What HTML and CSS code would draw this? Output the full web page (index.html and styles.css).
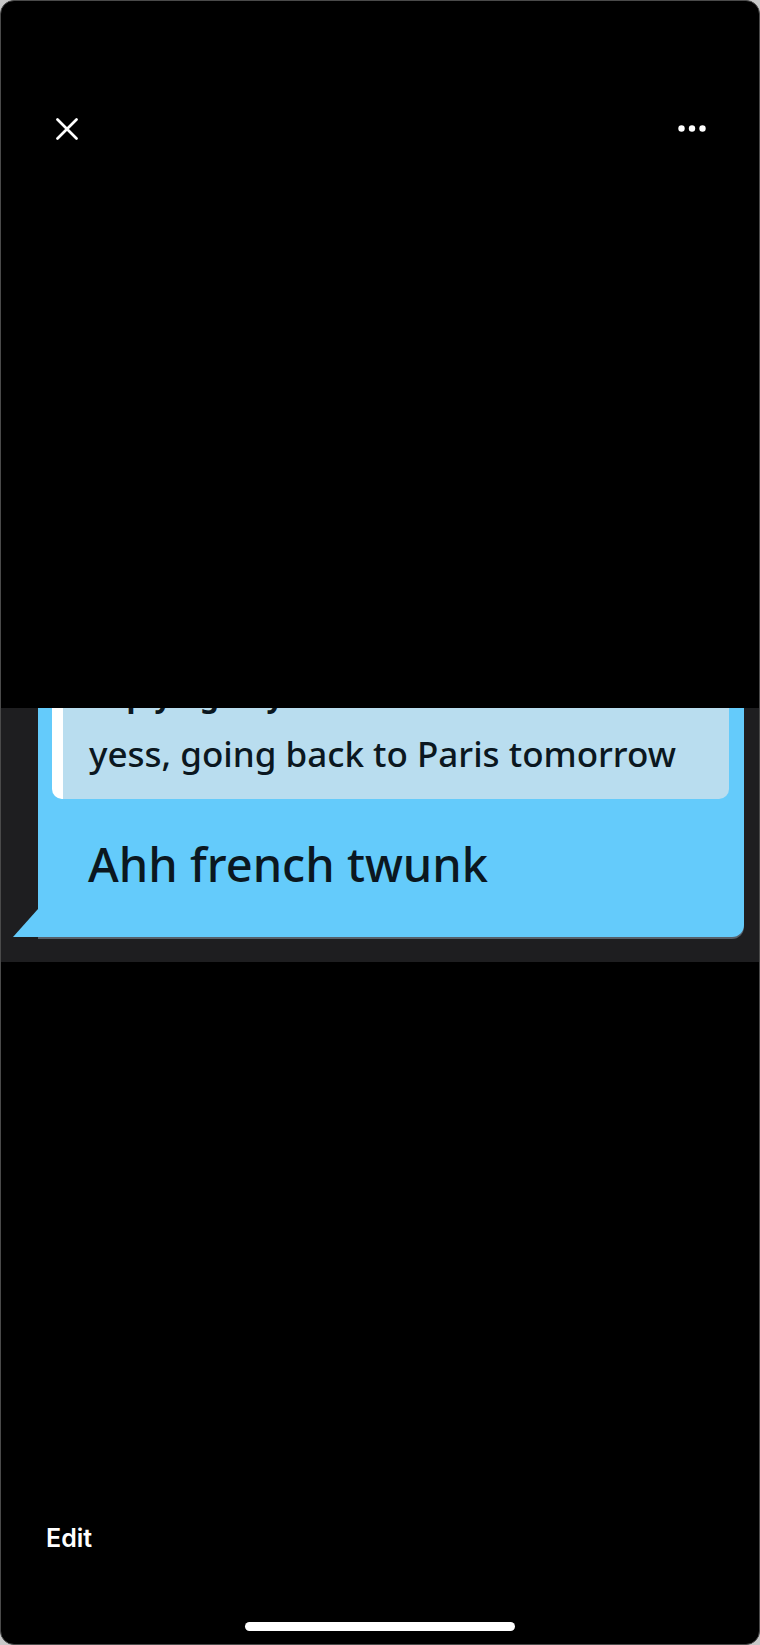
FILE: index.html
```html
<!DOCTYPE html>
<html lang="en">
<head>
  <meta charset="UTF-8" />
  <meta name="viewport" content="width=device-width, initial-scale=1.0"/>
  <title>Photo</title>
  <link rel="stylesheet" href="styles.css">
</head>
<body>
  <div class="screen">
    <!-- Top bar: close + more -->
    <div class="topbar">
      <svg class="icon-close" width="22" height="22" viewBox="0 0 22 22">
        <path d="M1.5 1.5 L20.5 20.5 M20.5 1.5 L1.5 20.5" stroke="#fff" stroke-width="2.7" stroke-linecap="round"/>
      </svg>
      <svg class="icon-more" width="28" height="7" viewBox="0 0 28 7">
        <circle cx="3.5" cy="3.5" r="3.2" fill="#fff"/>
        <circle cx="14" cy="3.5" r="3.2" fill="#fff"/>
        <circle cx="24.5" cy="3.5" r="3.2" fill="#fff"/>
      </svg>
    </div>

    <!-- Foto screenshot chat -->
    <div class="viewer">
      <div class="shot">
        <div class="bubble">
          <div class="quote">
            <div class="quote-name">Replying to you</div>
            <div class="quote-text">yess, going back to Paris tomorrow</div>
          </div>
          <div class="message">Ahh french twunk</div>
          <div class="tail"></div>
        </div>
      </div>
    </div>

    <!-- Bawah -->
    <div class="footer">
      <div class="edit">Edit</div>
      <div class="home-bar"></div>
    </div>
  </div>
</body>
</html>
```

FILE: styles.css
```css
body {
  margin: 0;
  padding: 0;
  background: #c8c8c8;
  font-family: Inter, "Noto Sans", Arial, sans-serif;
  overflow: hidden;
}
.screen {
  width: 760px;
  height: 1645px;
  box-sizing: border-box;
  background: #000;
  border-radius: 14px;
  border: 1px solid #4a4a4a;
  display: flex;
  flex-direction: column;
  overflow: hidden;
}
.topbar {
  height: 255px;
  display: flex;
  align-items: center;
  justify-content: space-between;
  padding: 0 53px 0 55px;
}
.viewer {
  padding-top: 452px;
}
.shot {
  height: 254px;
  background: #1e1e20;
  overflow: hidden;
  padding: 0 15px 0 37px;
}
.bubble {
  position: relative;
  background: #64cbfb;
  margin-top: -32px;
  padding: 0 15px 0 14px;
  border-radius: 0 0 12px 0;
  box-shadow: 0 2px 0 #56606a;
  font-family: "Noto Sans", Arial, sans-serif;
  color: #0b1720;
}
.tail {
  position: absolute;
  left: -25px;
  bottom: 0;
  width: 0;
  height: 0;
  border-style: solid;
  border-width: 0 0 28px 25px;
  border-color: transparent transparent #64cbfb transparent;
}
.quote {
  background: #b9ddef;
  border-left: 11px solid #fff;
  border-radius: 0 0 10px 10px;
  padding: 0 0 23px 26px;
}
.quote-name {
  font-size: 30px;
  line-height: 40px;
  font-weight: 700;
}
.quote-text {
  margin-top: 16px;
  font-size: 35px;
  line-height: 44px;
  font-weight: 500;
}
.message {
  padding: 35px 0 43px 36px;
  font-size: 47px;
  line-height: 60px;
  font-weight: 500;
}
.footer {
  margin-top: auto;
  display: flex;
  flex-direction: column;
}
.edit {
  padding-left: 45px;
  font-size: 25px;
  line-height: 28px;
  font-weight: 600;
  color: #fff;
}
.home-bar {
  align-self: center;
  width: 270px;
  height: 9px;
  border-radius: 5px;
  background: #fff;
  margin: 70px 0 13px;
}
```
